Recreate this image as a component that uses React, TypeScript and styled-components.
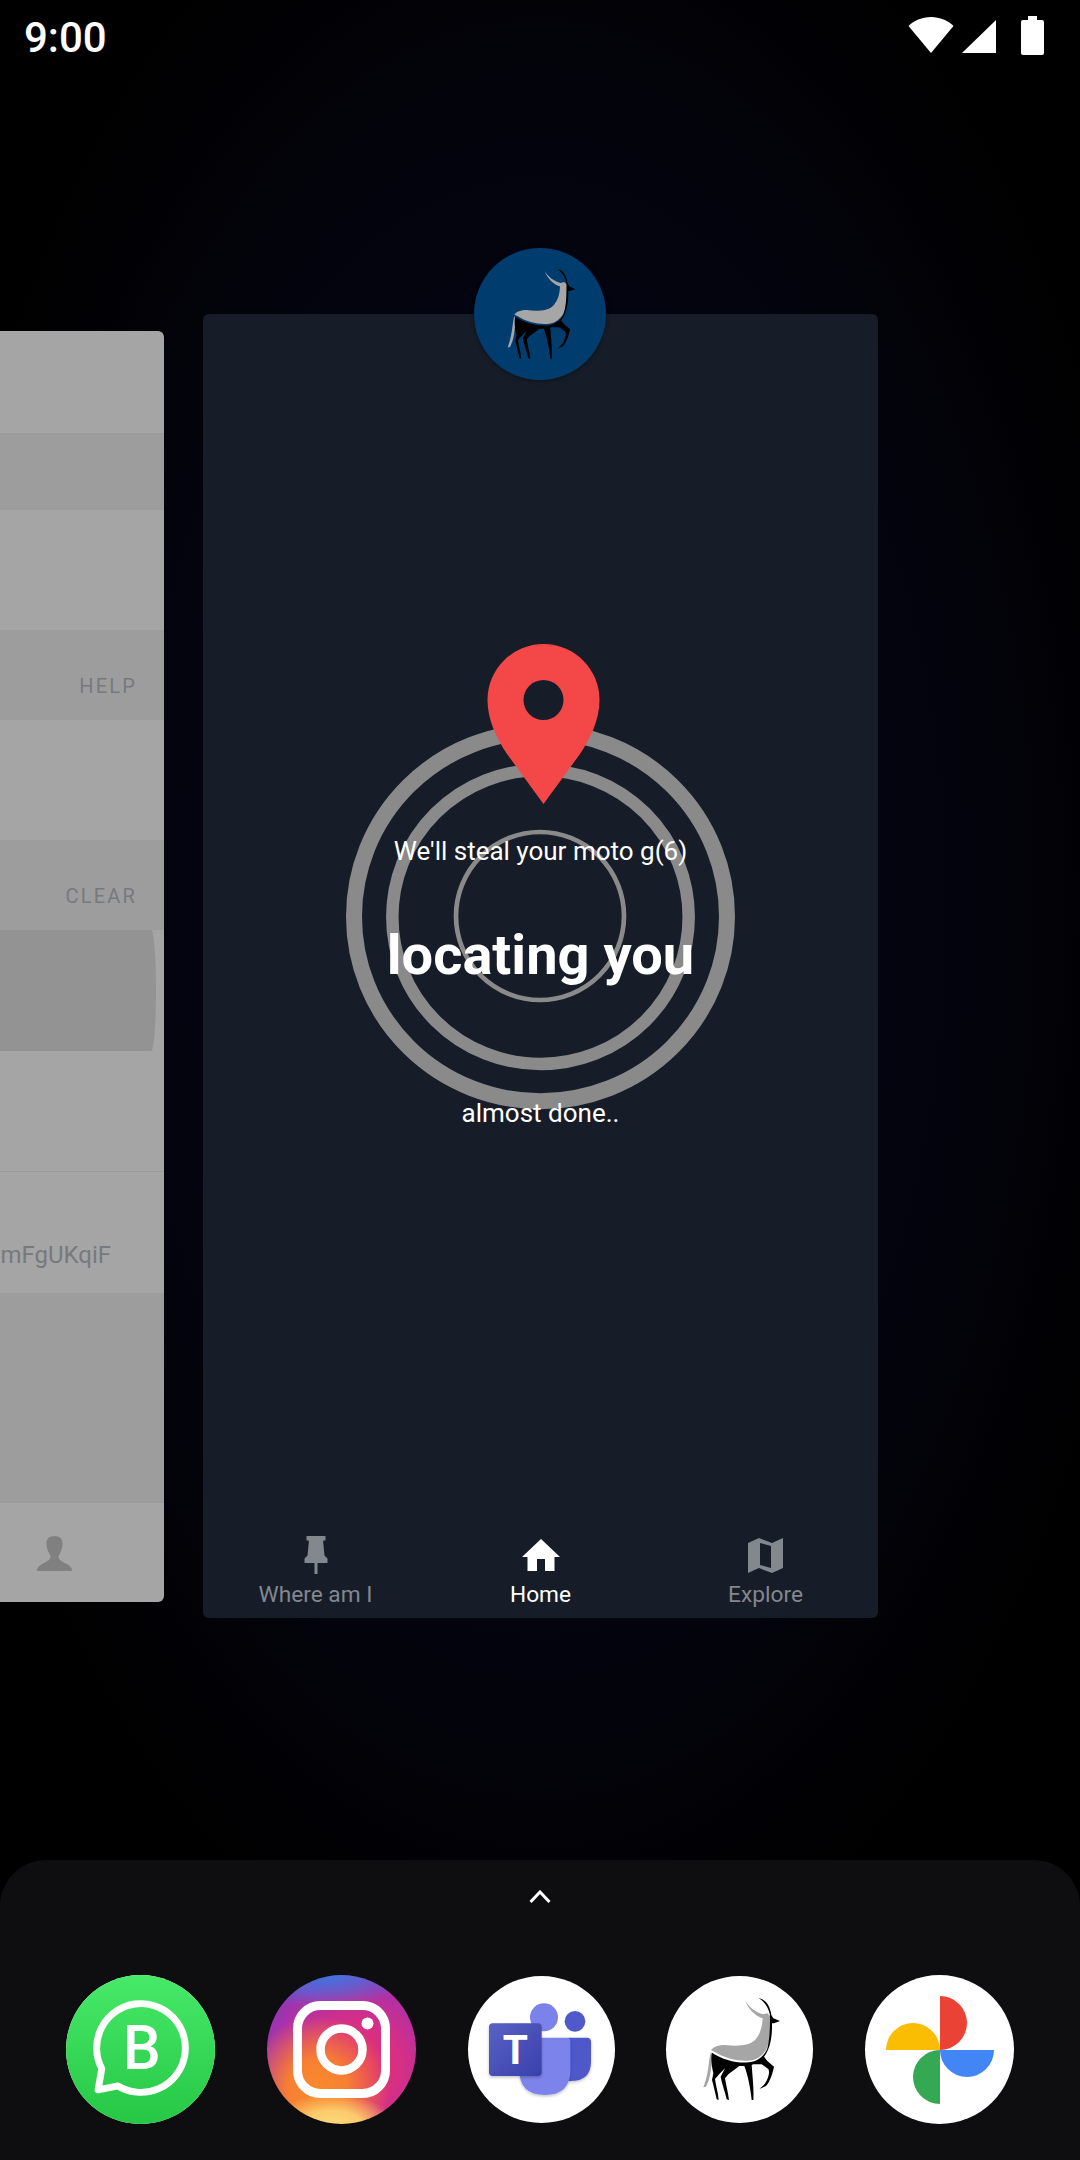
import React from "react";
import styled, { createGlobalStyle } from "styled-components";

const GlobalStyle = createGlobalStyle`
  html, body {
    margin: 0;
    padding: 0;
    background: #000;
  }
  body {
    font-family: Roboto, "Liberation Sans", sans-serif;
  }
`;

const Screen = styled.div`
  width: 1080px;
  height: 2160px;
  display: flex;
  flex-direction: column;
  overflow: hidden;
  background: radial-gradient(ellipse 58% 52% at 50% 42%, #06061a 0%, #04040f 62%, #000 100%);
`;

const StatusBar = styled.div`
  height: 72px;
  padding: 0 36px 0 24px;
  box-sizing: border-box;
  display: flex;
  align-items: flex-start;
  justify-content: space-between;
`;

const Time = styled.span`
  padding-top: 2px;
  color: #fff;
  font-size: 42px;
  font-weight: 500;
  line-height: 72px;
`;

const StatusIcons = styled.div`
  padding-top: 16px;
  display: flex;
  align-items: flex-start;
  gap: 8px;
`;

const WifiIcon = styled.svg`
  margin-top: 1px;
`;

const SignalIcon = styled.svg`
  margin-top: 4px;
`;

const BatteryIcon = styled.svg`
  margin-left: 17px;
`;

const Carousel = styled.div`
  margin-top: 242px;
  height: 1304px;
  display: flex;
  align-items: center;
  gap: 39px;
`;

const SideCard = styled.div`
  width: 164px;
  height: 1271px;
  flex: none;
  display: flex;
  flex-direction: column;
  overflow: hidden;
  background: #a5a5a5;
  border-radius: 0 6px 6px 0;
`;

const SideRow = styled.div<{ $h: number; $dark?: boolean; $line?: boolean; $shift?: number }>`
  height: ${(p) => p.$h}px;
  flex: none;
  box-sizing: border-box;
  display: flex;
  align-items: center;
  justify-content: flex-end;
  padding: ${(p) => p.$shift || 0}px 27px 0 0;
  white-space: nowrap;
  background: ${(p) => (p.$dark ? "#9d9d9d" : "transparent")};
  border-bottom: ${(p) => (p.$line ? "1px solid #9a9a9a" : "none")};
  color: #78797d;
  font-size: 20px;
  letter-spacing: 2.2px;
`;

const SideValue = styled.span`
  margin-right: 26px;
  font-size: 24px;
  letter-spacing: 0;
`;

const SidePill = styled.div`
  width: 156px;
  height: 121px;
  flex: none;
  background: #939393;
  border-radius: 0 5px 5px 0 / 0 50% 50% 0;
`;

const SideNav = styled.div`
  flex: 1;
  display: flex;
  justify-content: flex-end;
  padding: 33px 92px 0 0;
  border-top: 1px solid #9a9a9a;
`;

const MainCard = styled.div`
  position: relative;
  width: 675px;
  height: 1304px;
  flex: none;
  display: flex;
  flex-direction: column;
  background: #161d28;
  border-radius: 6px;
`;

const Badge = styled.div`
  position: absolute;
  top: -66px;
  left: 50%;
  margin-left: -67px;
  width: 132px;
  height: 132px;
  display: flex;
  align-items: center;
  justify-content: center;
  border-radius: 50%;
  background: #003d6e;
  box-shadow: 0 1px 4px rgba(0, 0, 0, 0.4);
`;

const Stage = styled.div`
  position: relative;
  margin-top: 330px;
  padding-top: 192px;
  display: flex;
  flex-direction: column;
  align-items: center;
`;

const Radar = styled.svg`
  position: absolute;
  top: 0;
  left: 137px;
`;

const Caption = styled.div`
  position: relative;
  color: #fff;
  font-size: 26px;
  line-height: 30px;
`;

const Headline = styled.div`
  position: relative;
  margin: 50px 0 104px;
  color: #fff;
  font-size: 56px;
  font-weight: 700;
  line-height: 78px;
`;

const BottomNav = styled.div`
  margin-top: auto;
  height: 88px;
  box-sizing: border-box;
  padding-top: 5px;
  display: grid;
  grid-template-columns: repeat(3, 225px);
`;

const NavItem = styled.div<{ $active?: boolean }>`
  display: flex;
  flex-direction: column;
  align-items: center;
  color: ${(p) => (p.$active ? "#fff" : "#83878e")};
`;

const NavIcon = styled.div`
  height: 40px;
  display: flex;
  align-items: center;
  justify-content: center;
`;

const NavLabel = styled.span`
  margin-top: 5px;
  font-size: 22.7px;
  line-height: 30px;
`;

const Dock = styled.div`
  margin-top: auto;
  height: 300px;
  box-sizing: border-box;
  padding-top: 30px;
  display: flex;
  flex-direction: column;
  align-items: center;
  background: #0e0e11;
  border-radius: 46px 46px 0 0;
`;

const AppRow = styled.div`
  margin-top: 72px;
  width: 948px;
  display: flex;
  justify-content: space-between;
  align-items: center;
`;

const AppIcon = styled.div<{ $size?: number }>`
  width: ${(p) => p.$size || 149}px;
  height: ${(p) => p.$size || 149}px;
  display: flex;
  align-items: center;
  justify-content: center;
  border-radius: 50%;
  overflow: hidden;
  background: #fff;
`;

const InstagramIcon = styled(AppIcon)`
  background:
    radial-gradient(ellipse 42% 20% at 44% 100%, #fdd87a 0%, #fccb6c 45%, rgba(252, 190, 100, 0) 100%),
    radial-gradient(circle at 34% 76%, #f98a2c 0%, #f77f33 20%, rgba(247, 127, 51, 0) 48%),
    radial-gradient(ellipse 62% 24% at 38% -2%, #3a78e4 0%, rgba(58, 120, 228, 0.55) 55%, rgba(58, 120, 228, 0) 100%),
    radial-gradient(circle at 60% 62%, #e5306c 0%, #d52f86 36%, #b030a6 62%, #8339bb 86%, #6f42c0 100%);
`;

const Gazelle = ({ width, height }: { width: number; height: number }) => (
  <svg width={width} height={height} viewBox="0 0 360 390">
    <path
      fill="#a6a6a6"
      d="M196,47 C208,68 228,82 250,88 L262,85 L273,95 C275,125 272,165 258,195 C245,215 225,228 200,227 C170,228 130,218 103,200 L93,196 C100,185 115,180 135,180 C165,183 205,185 225,165 C240,150 247,125 248,100 C225,92 205,72 196,47 Z"
    />
    <path
      fill="#a6a6a6"
      d="M93,200 C85,225 88,260 70,307 L78,305 C90,285 95,250 97,210 Z"
    />
    <path
      fill="#000"
      d="M236,40 C255,42 270,60 274,90 L280,100 L300,108 L282,115 L276,115 C277,150 272,190 252,215 L262,228 L282,245 C278,265 270,290 258,303 L238,312 C250,303 258,295 263,280 C268,268 268,258 265,252 L245,238 L220,238 L215,240 C218,280 222,315 220,345 L215,345 C212,315 205,275 193,243 L178,243 L145,268 L135,280 C138,300 145,325 147,345 L140,343 C135,320 125,295 122,275 L135,250 L120,265 L105,282 C108,305 115,325 116,345 L110,343 C105,320 100,300 96,285 L100,265 C95,245 92,220 96,203 C130,225 170,235 205,232 C235,230 255,210 262,190 C270,160 270,120 270,90 C265,65 252,48 236,40 Z"
    />
  </svg>
);

const WhatsApp = () => (
  <svg width="149" height="149" viewBox="0 0 450 450">
    <defs>
      <linearGradient id="waBg" x1="0" y1="0" x2="0" y2="1">
        <stop offset="0" stopColor="#47ea68" />
        <stop offset="1" stopColor="#25c745" />
      </linearGradient>
    </defs>
    <rect width="450" height="450" fill="url(#waBg)" />
    <path
      d="M157,335 A134,134 0 1 0 108,283 L97,347 Z"
      fill="none"
      stroke="#fff"
      strokeWidth="21"
      strokeLinejoin="round"
    />
    <text
      x="229"
      y="285"
      textAnchor="middle"
      fill="#fff"
      fontFamily="Roboto, sans-serif"
      fontWeight="500"
      fontSize="182"
    >
      B
    </text>
  </svg>
);

const Instagram = () => (
  <svg width="149" height="149" viewBox="0 0 149 149" fill="none" stroke="#fff">
    <rect x="30.5" y="30.5" width="88" height="88" rx="23" strokeWidth="9" />
    <circle cx="74.5" cy="74.5" r="21" strokeWidth="8.5" />
    <circle cx="100.5" cy="48.5" r="6" fill="#fff" stroke="none" />
  </svg>
);

const Teams = () => (
  <svg width="140" height="140" viewBox="0 0 420 420">
    <defs>
      <linearGradient id="teamsBg" x1="0" y1="0" x2="1" y2="1">
        <stop offset="0" stopColor="#5a62c3" />
        <stop offset="1" stopColor="#3940ab" />
      </linearGradient>
      <filter id="teamsShadow" x="-20%" y="-20%" width="140%" height="140%">
        <feDropShadow dx="0" dy="4" stdDeviation="5" floodColor="#000" floodOpacity="0.25" />
      </filter>
    </defs>
    <circle cx="312" cy="124" r="31" fill="#5059c9" />
    <path
      d="M290,173 H348 Q360,173 360,185 V245 Q360,303 298,303 H290 Z"
      fill="#5059c9"
      filter="url(#teamsShadow)"
    />
    <circle cx="219" cy="112" r="42" fill="#7b83eb" />
    <path
      d="M150,173 H286 Q298,173 298,185 V270 Q298,345 222,345 Q145,345 145,270 Z"
      fill="#7b83eb"
      filter="url(#teamsShadow)"
    />
    <rect x="54" y="130" width="158" height="158" rx="11" fill="url(#teamsBg)" filter="url(#teamsShadow)" />
    <text
      x="133"
      y="252"
      textAnchor="middle"
      fill="#fff"
      fontFamily="Roboto, sans-serif"
      fontWeight="700"
      fontSize="122"
    >
      T
    </text>
  </svg>
);

const Photos = () => (
  <svg width="108" height="108" viewBox="0 0 108 108">
    <path d="M54,0 a27,27 0 0 1 0,54 z" fill="#ea4335" />
    <path d="M54,54 h54 a27,27 0 0 1 -54,0 z" fill="#4285f4" />
    <path d="M54,54 v54 a27,27 0 0 1 0,-54 z" fill="#34a853" />
    <path d="M54,54 h-54 a27,27 0 0 1 54,0 z" fill="#fbbc04" />
  </svg>
);

export default function App() {
  return (
    <Screen>
      <GlobalStyle />
      <StatusBar>
        <Time>9:00</Time>
        <StatusIcons>
          <WifiIcon width="46" height="36" viewBox="0 0 46 36">
            <path d="M23 36 L0.5 9 C6 3.5 14 0 23 0 C32 0 40 3.5 45.5 9 Z" fill="#fff" />
          </WifiIcon>
          <SignalIcon width="34" height="33" viewBox="0 0 34 33">
            <path d="M34 0 V33 H0 Z" fill="#fff" />
          </SignalIcon>
          <BatteryIcon width="23" height="39" viewBox="0 0 23 39">
            <path d="M7 0 H16 V4 H21 Q23 4 23 6 V37 Q23 39 21 39 H2 Q0 39 0 37 V6 Q0 4 2 4 H7 Z" fill="#fff" />
          </BatteryIcon>
        </StatusIcons>
      </StatusBar>

      <Carousel>
        <SideCard>
          <SideRow $h={103} $line />
          <SideRow $h={76} $dark />
          <SideRow $h={120} />
          <SideRow $h={90} $dark $shift={22}>HELP</SideRow>
          <SideRow $h={120} />
          <SideRow $h={90} $dark $shift={22}>CLEAR</SideRow>
          <SidePill />
          <SideRow $h={121} $line />
          <SideRow $h={121} $shift={46}>
            <SideValue>lmFgUKqiF</SideValue>
          </SideRow>
          <SideRow $h={209} $dark />
          <SideNav>
            <svg width="35" height="35" viewBox="0 0 35 35">
              <path
                d="M17.5 0 C24 0 26 4 25.5 9 C25 14 23 17 21.5 20 C21 23 24 25 28 27 C32 29 35 31 35 35 H0 C0 31 3 29 7 27 C11 25 14 23 13.5 20 C12 17 10 14 9.5 9 C9 4 11 0 17.5 0 Z"
                fill="#808080"
              />
            </svg>
          </SideNav>
        </SideCard>

        <MainCard>
          <Badge>
            <Gazelle width={106} height={115} />
          </Badge>
          <Stage>
            <Radar width="400" height="470" viewBox="0 0 400 470">
              <g fill="none" stroke="#8a8a8a">
                <ellipse cx="200.5" cy="272.5" rx="186.5" ry="184.7" strokeWidth="16" />
                <ellipse cx="200.5" cy="273" rx="148.2" ry="147" strokeWidth="12.5" />
                <circle cx="200" cy="272" r="84" strokeWidth="4.7" />
              </g>
              <path
                fill="#f44848"
                fillRule="evenodd"
                d="M147.5,56 A56,56 0 0 1 259.5,56 C259.5,76 250,95 240,110 L203.5,160 L167,110 C157,95 147.5,76 147.5,56 Z M183.5,56 A20,20 0 0 0 223.5,56 A20,20 0 0 0 183.5,56 Z"
              />
            </Radar>
            <Caption>We'll steal your moto g(6)</Caption>
            <Headline>locating you</Headline>
            <Caption>almost done..</Caption>
          </Stage>
          <BottomNav>
            <NavItem>
              <NavIcon>
                <svg width="26" height="38" viewBox="0 0 26 38" fill="currentColor">
                  <path d="M3.5 0 H22.5 V4.5 H20 L21.5 19.5 L24.5 22.5 V27 H14.5 V38 H11.5 V27 H1.5 V22.5 L4.5 19.5 L6 4.5 H3.5 Z" />
                </svg>
              </NavIcon>
              <NavLabel>Where am I</NavLabel>
            </NavItem>
            <NavItem $active>
              <NavIcon>
                <svg width="38" height="32" viewBox="0 0 38 32" fill="currentColor">
                  <path d="M19 0 L38 18 H32.5 V32 H23 V20 H15 V32 H5.5 V18 H0 Z" />
                </svg>
              </NavIcon>
              <NavLabel>Home</NavLabel>
            </NavItem>
            <NavItem>
              <NavIcon>
                <svg width="35" height="35" viewBox="0 0 35 35" fill="currentColor">
                  <path
                    fillRule="evenodd"
                    d="M0 5 L11 0 L24 5 L35 0 V30 L24 35 L11 30 L0 35 Z M12 5 V27 L23 30 V8 Z"
                  />
                </svg>
              </NavIcon>
              <NavLabel>Explore</NavLabel>
            </NavItem>
          </BottomNav>
        </MainCard>
      </Carousel>

      <Dock>
        <svg width="22" height="13" viewBox="0 0 22 13">
          <path d="M1.5 12 L11 2 L20.5 12" fill="none" stroke="#fff" strokeWidth="3" />
        </svg>
        <AppRow>
          <AppIcon>
            <WhatsApp />
          </AppIcon>
          <InstagramIcon>
            <Instagram />
          </InstagramIcon>
          <AppIcon $size={147}>
            <Teams />
          </AppIcon>
          <AppIcon $size={147}>
            <Gazelle width={120} height={130} />
          </AppIcon>
          <AppIcon>
            <Photos />
          </AppIcon>
        </AppRow>
      </Dock>
    </Screen>
  );
}
